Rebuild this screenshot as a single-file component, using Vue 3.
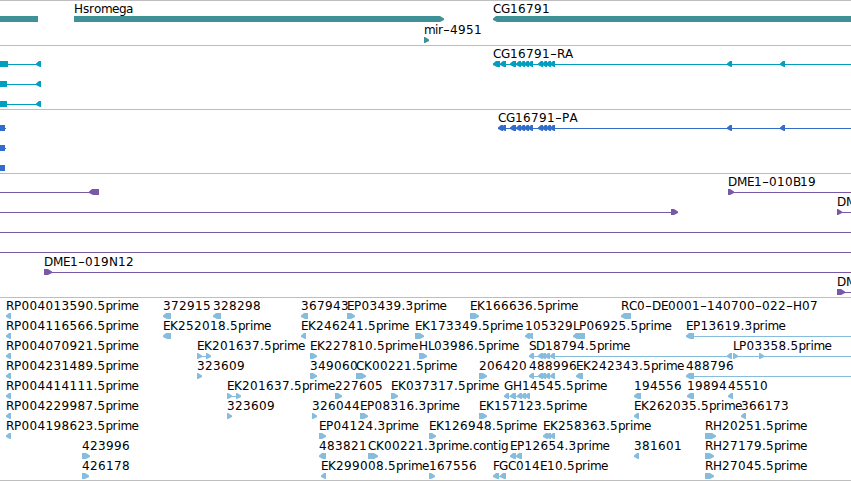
<template>
  <div class="browser">
    <section
      v-for="track in tracks"
      :key="track.name"
      class="track"
      :class="track.name"
    >
      <svg width="851" :height="track.rows * 20 + track.pad">
        <g
          v-for="(f, i) in track.features"
          :key="i"
          :transform="`translate(0 ${f.row * (track.pitch || 20)})`"
        >
          <rect
            v-if="f.line"
            :x="f.line[0]"
            y="18"
            :width="f.line[1] - f.line[0]"
            height="1"
          />
          <polygon v-for="(e, j) in f.exons" :key="j" :points="shape(e, f.dir)" />
          <text v-if="f.label" y="12"><tspan
            v-for="(c, j) in letters(f.label, f.x)"
            :key="j"
            :x="c.x"
            :textLength="c.wide"
            :lengthAdjust="c.wide && 'spacingAndGlyphs'"
          >{{ c.text }}</tspan></text>
        </g>
      </svg>
    </section>
  </div>
</template>

<script setup>
// Advance widths of the label characters, digits are 8px
const advances = {
  A: 8, B: 7, C: 8, D: 9, E: 7, F: 6, G: 9, H: 9, K: 8, L: 6, M: 10, N: 9,
  P: 7.5, R: 8, S: 7, a: 7, c: 6, e: 7, g: 7, i: 3, m: 11, n: 7, o: 7, p: 7,
  r: 5, s: 6, t: 5, '.': 4, '-': 7
}

// One run per stretch of characters, dashes are drawn wide
const letters = (label, start) => {
  let x = start
  return label.split(/(-)/).filter(Boolean).map((text) => {
    const xs = [...text].map((c) => {
      const at = x
      x += advances[c] || 8
      return at
    })
    return { text, x: xs.join(' '), wide: text === '-' ? 7 : undefined }
  })
}

// Strand arrow: '<' and '>' point along the strand, anything else is a box
const shape = ([a, b], dir) => {
  const head = Math.min(5, b - a)
  if (dir === '<') {
    return `${a},17.4 ${a + head - 2},15 ${b},15 ${b},21 ${a + head - 1},21 ${a},19`
  }
  if (dir === '>') {
    return `${a},15 ${b - head + 1},15 ${b},17.4 ${b},19 ${b - head + 1},21 ${a},21`
  }
  return `${a},15 ${b},15 ${b},21 ${a},21`
}

const f = (row, label, dir, exons, line, x = exons.length ? exons[0][0] : 0) => ({
  row, label, dir, exons, line, x
})

const cluster = [[538, 543], [542, 547], [546, 551], [550, 555]]
const inner = [[510, 516], [516, 521], [520, 525], [524, 529], [528, 533], ...cluster, [727, 732], [780, 785]]
const estCluster = [[529, 534], [538, 543], [541, 546], [545, 550], [550, 555]]

const ests = [
  f(0, 'RP004013590.5prime', '<', [[6, 11]]),
  f(1, 'RP004116566.5prime', '<', [[6, 11]]),
  f(2, 'RP004070921.5prime', '<', [[6, 11]]),
  f(3, 'RP004231489.5prime', '<', [[6, 11]]),
  f(4, 'RP004414111.5prime', '<', [[6, 11]]),
  f(5, 'RP004229987.5prime', '<', [[6, 11]]),
  f(6, 'RP004198623.5prime', '<', [[6, 11]]),
  f(7, '423996', '>', [[82, 90]]),
  f(8, '426178', '>', [[82, 89]]),
  f(0, '372915', '<', [[163, 171]]),
  f(0, '328298', '<', [[213, 221]]),
  f(0, '367943', '<', [[301, 308]]),
  f(0, 'EP03439.3prime', '>', [[347, 355]]),
  f(0, 'EK166636.5prime', '>', [[470, 479]]),
  f(0, 'RC0-DE0001-140700-022-H07', '<', [[621, 631]]),
  f(1, 'EK252018.5prime', '<', [[163, 171]]),
  f(1, 'EK246241.5prime', '<', [[301, 306]]),
  f(1, 'EK173349.5prime', '>', [[415, 424]]),
  f(1, '105329', '<', [[525, 530], [528, 533]]),
  f(1, 'LP06925.5prime', '<', [[573, 585]]),
  f(1, 'EP13619.3prime', '<', [[686, 694]], [686, 851]),
  f(2, 'EK201637.5prime', '>', [[197, 202], [206, 211]], [197, 211]),
  f(2, 'EK227810.5prime', '>', [[310, 317]]),
  f(2, 'HL03986.5prime', '>', [[419, 427]]),
  f(2, 'SD18794.5prime', '<', [...estCluster, [727, 732]], [529, 732]),
  f(2, 'LP03358.5prime', '>', [[733, 738], [759, 764]], [733, 851]),
  f(3, '323609', '>', [[197, 202]]),
  f(3, '349060', '>', [[310, 317]]),
  f(3, 'CK00221.5prime', '>', [[356, 366]]),
  f(3, '206420', '>', [[479, 487]]),
  f(3, '488996', '<', estCluster, [529, 555]),
  f(3, 'EK242343.5prime', '<', [[576, 583]]),
  f(3, '488796', '<', [[686, 694]], [686, 851]),
  f(4, 'EK201637.5prime', '>', [[227, 232], [236, 241]], [227, 241]),
  f(4, '227605', '>', [[335, 342]]),
  f(4, 'EK037317.5prime', '>', [[391, 398]]),
  f(4, 'GH14545.5prime', '<', [[504, 509], [510, 516], [517, 522], [521, 526], [525, 530]], [504, 530]),
  f(4, '194556', '<', [[634, 641]]),
  f(4, '19894', '<', [[687, 694]]),
  f(4, '45510', '<', [[728, 733]]),
  f(5, '323609', '>', [[227, 232]]),
  f(5, '326044', '>', [[312, 317]]),
  f(5, 'EP08316.3prime', '>', [[360, 368]]),
  f(5, 'EK157123.5prime', '>', [[479, 487]]),
  f(5, 'EK262035.5prime', '<', [[634, 639]]),
  f(5, '366173', '<', [[741, 746]]),
  f(6, 'EP04124.3prime', '>', [[319, 326]]),
  f(6, 'EK126948.5prime', '>', [[429, 436]]),
  f(6, 'EK258363.5prime', '<', [[543, 548], [546, 551], [550, 555]]),
  f(6, 'RH20251.5prime', '>', [[705, 716]]),
  f(7, '483821', '<', [[319, 326]]),
  f(7, 'CK00221.3prime.contig', '>', [[368, 378]]),
  f(7, 'EP12654.3prime', '<', [[510, 516], [516, 522]]),
  f(7, '381601', '<', [[634, 639]]),
  f(7, 'RH27179.5prime', '>', [[705, 714]]),
  f(8, 'EK299008.5prime', '<', [[321, 326]]),
  f(8, '167556', '>', [[429, 435]]),
  f(8, 'FGC014E10.5prime', '<', [[493, 499], [500, 506]], [493, 506]),
  f(8, 'RH27045.5prime', '>', [[705, 714]])
]

const tracks = [
  {
    name: 'genes',
    rows: 2,
    pad: 4,
    pitch: 21,
    features: [
      f(0, '', '', [[0, 38]]),
      f(0, 'Hsromega', '>', [[74, 444]]),
      f(0, 'CG16791', '<', [[493, 851]]),
      f(1, 'mir-4951', '>', [[424, 429]])
    ]
  },
  {
    name: 'transcripts',
    rows: 3,
    pad: 3,
    features: [
      f(0, '', '', [[0, 8]], [0, 38]),
      f(0, '', '<', [[36, 41]]),
      f(1, '', '', [[0, 7]], [0, 38]),
      f(1, '', '<', [[36, 41]]),
      f(2, '', '', [[0, 7]], [0, 38]),
      f(2, '', '<', [[36, 41]]),
      f(0, 'CG16791-RA', '<', [[493, 500], [500, 506], ...inner], [493, 851])
    ]
  },
  {
    name: 'proteins',
    rows: 3,
    pad: 3,
    features: [
      f(0, '', '', [[0, 5]], [0, 6]),
      f(1, '', '', [[0, 5]], [0, 6]),
      f(2, '', '', [[0, 5]]),
      f(0, 'CG16791-PA', '<', [[498, 503], [501, 506], ...inner], [498, 851])
    ]
  },
  {
    name: 'clones',
    rows: 6,
    pad: 3,
    features: [
      f(0, '', '<', [[89, 99]], [0, 99]),
      f(0, 'DME1-010B19', '>', [[728, 734]], [728, 851]),
      f(1, '', '>', [[671, 678]], [0, 678]),
      f(1, 'DM', '>', [[837, 842]], [837, 851]),
      f(2, '', '', [], [0, 851]),
      f(3, '', '', [], [0, 851]),
      f(4, 'DME1-019N12', '>', [[44, 52]], [44, 851]),
      f(5, 'DM', '>', [[837, 845]], [837, 851])
    ]
  },
  { name: 'ests', rows: 9, pad: 2, features: ests }
]
</script>

<style>
body {
  background: #fff;
  overflow: hidden;
}
</style>

<style scoped>
.browser {
  display: flex;
  flex-direction: column;
  width: 851px;
  border-bottom: 1px solid #bebebe;
}

.track {
  border-top: 1px solid #bebebe;
}

.track svg {
  display: block;
}

.track text {
  fill: #000;
  font-family: "DejaVu Sans", sans-serif;
  font-size: 12px;
}

.genes {
  fill: #3f9097;
}

.transcripts {
  fill: #009fbf;
}

.proteins {
  fill: #326dcb;
}

.clones {
  fill: #7759a6;
}

.ests {
  fill: #86bcdc;
}
</style>
